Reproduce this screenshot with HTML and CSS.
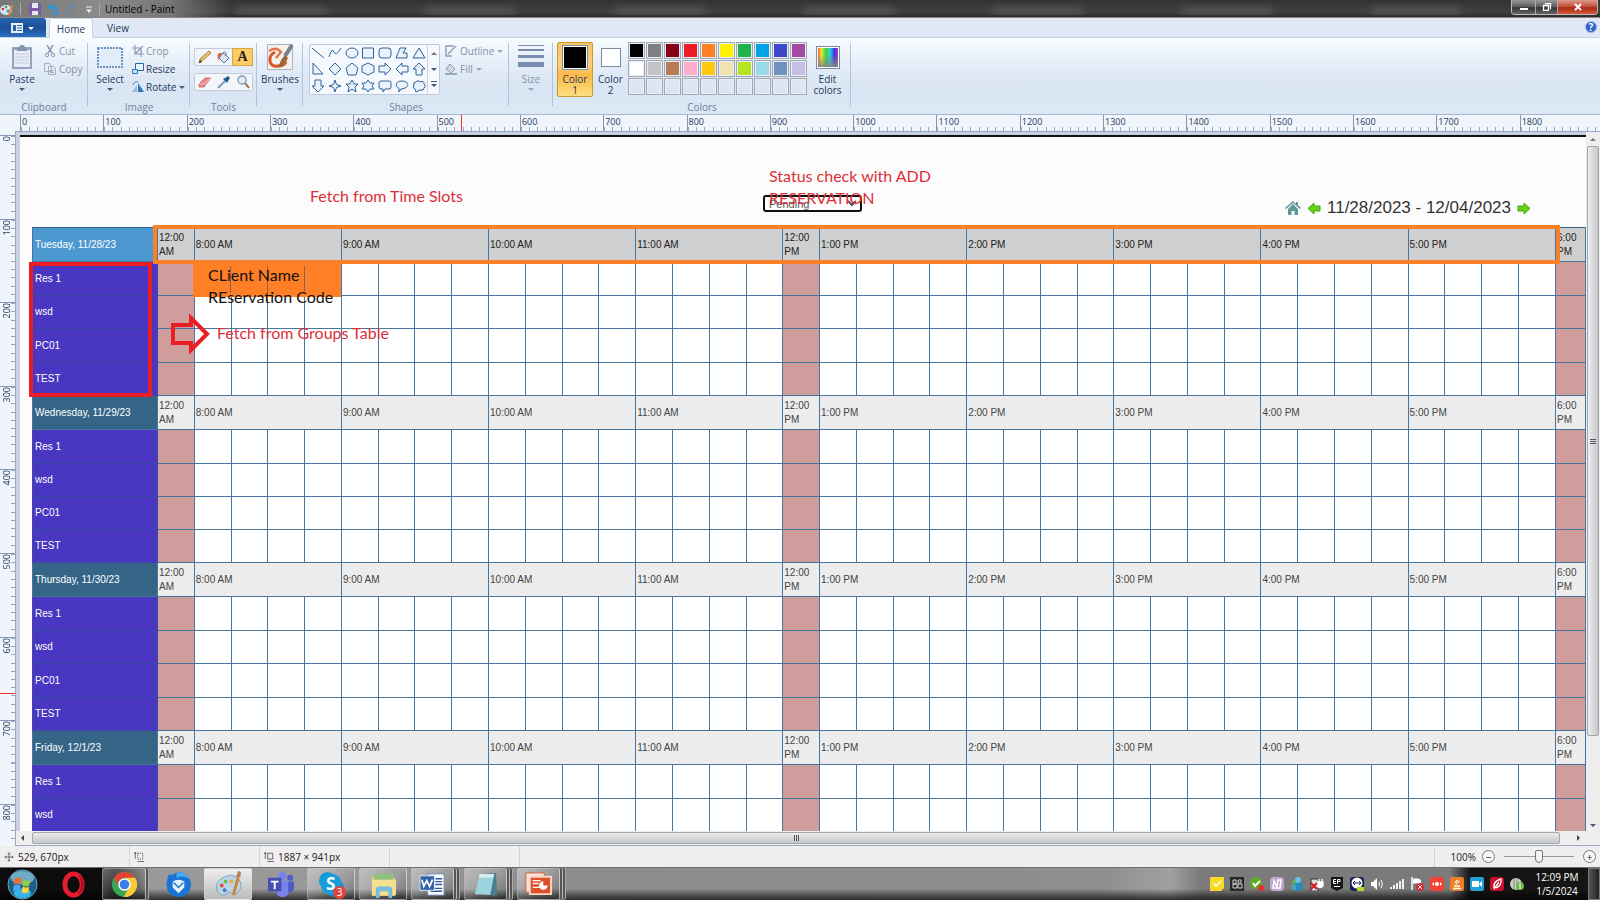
FILE: index.html
```html
<!DOCTYPE html>
<html lang="en">
<head>
<meta charset="utf-8">
<title>Untitled - Paint</title>
<link rel="stylesheet" href="styles.css">
</head>
<body>
<header class="titlebar">
  <svg class="app-icon" viewBox="0 0 14 14"><ellipse cx="6" cy="8" rx="6" ry="5" fill="#cfe6f2"/><circle cx="3" cy="7" r="1.3" fill="#d33"/><circle cx="6" cy="5" r="1.3" fill="#4a4"/><circle cx="8" cy="9" r="1.5" fill="#39c"/><path d="M12 3 9 13" stroke="#d98b2b" stroke-width="2"/></svg>
  <span class="bar-sep"></span>
  <button class="quick" aria-label="Save"><svg viewBox="0 0 12 12"><path d="M0 0h12v12H0z" fill="#7b5aa8"/><path d="M3 0h6v5H3zM3 8h6v4H3z" fill="#e9e4f4"/></svg></button>
  <button class="quick" aria-label="Undo"><svg viewBox="0 0 12 12"><path d="M4 4h3q4 1 2 6l-4 1" fill="none" stroke="#2f93cf" stroke-width="2.800"/><path d="M0 4 5 0v8z" fill="#2f93cf"/></svg></button>
  <button class="quick" aria-label="Redo"><svg viewBox="0 0 12 12"><path d="M8 4H5Q1 5 3 10l4 1" fill="none" stroke="#71869b" stroke-width="2.800"/><path d="M12 4 7 0v8z" fill="#71869b"/></svg></button>
  <button class="quick" aria-label="Customize"><svg viewBox="0 0 12 12"><path d="M3 4h6" stroke="#eee"/><path d="M3 6.500h6L6 10z" fill="#eee"/></svg></button>
  <span class="bar-sep"></span>
  <h1 class="title">Untitled - Paint</h1>
  <div class="ghosts"><i></i><i></i><i></i><i></i><i></i><i></i><i></i></div>
  <div class="win-buttons">
    <button class="min" aria-label="Minimize"><svg viewBox="0 0 10 8"><path d="M1 5h8v2H1z" fill="#fff"/></svg></button>
    <button class="max" aria-label="Restore"><svg viewBox="0 0 10 8"><path d="M3.500 0v1M3.500.5h5v5H8M1.500 2.500h5v5h-5z" fill="none" stroke="#fff" stroke-width="1.300"/></svg></button>
    <button class="close" aria-label="Close"><svg viewBox="0 0 10 8"><path d="m2 1 6 6M8 1 2 7" stroke="#fff" stroke-width="2"/></svg></button>
  </div>
</header>

<nav class="tabs">
  <button class="file-tab" aria-label="Paint menu"><svg viewBox="0 0 24 10"><path d="M0 0h12v10H0z" fill="#e8f0fa"/><path d="M2 2h3v6H2z" fill="#2d62ad"/><path d="M6 2.500h5M6 5h5M6 7.500h5" stroke="#2d62ad"/><path d="M17 4h6l-3 3z" fill="#fff"/></svg></button>
  <button class="tab active">Home</button>
  <button class="tab">View</button>
  <button class="help" aria-label="Help">?</button>
</nav>

<section class="ribbon">
  <div class="group g-clipboard">
    <div class="body">
      <button class="big"><svg class="big-icon" viewBox="0 0 24 26"><rect x="2" y="3" width="20" height="22" rx="1" fill="#93a3bb"/><path d="M4 6h16v17H4z" fill="#e7edf6"/><path d="M7 4h2q0-3 3-3t3 3h2v3H7z" fill="#8796ae"/><path d="M5 10h14M5 13h14M5 16h14M5 19h14" stroke="#c2ccdc"/></svg><span>Paste</span><i class="drop"></i></button>
      <div class="stack">
        <button class="small off"><svg viewBox="0 0 12 12"><path d="M3 0 8 8M9 0 4 8" stroke="#8d9bb3" stroke-width="1.500"/><circle cx="3" cy="10" r="1.700" fill="none" stroke="#8d9bb3"/><circle cx="9" cy="10" r="1.700" fill="none" stroke="#8d9bb3"/></svg>Cut</button>
        <button class="small off"><svg viewBox="0 0 12 12"><path d="M.5.5h5l2 2v6h-7zM4.500 3.500h5l2 2v6h-7z" fill="#e6ebf4" stroke="#a0adc2"/><path d="M6 7.500h4M6 9.500h4" stroke="#a0adc2"/></svg>Copy</button>
      </div>
    </div>
    <h2>Clipboard</h2>
  </div>
  <div class="group g-image">
    <div class="body">
      <button class="big"><svg class="big-icon" viewBox="0 0 26 26"><rect x="1" y="4" width="24" height="19" fill="#e3edf9" stroke="#4a78ad" stroke-width="1.500" stroke-dasharray="2 1"/></svg><span>Select</span><i class="drop"></i></button>
      <div class="stack">
        <button class="small off"><svg viewBox="0 0 12 12"><path d="M3 0v9h9M0 3h9v9M3 9l8-8" fill="none" stroke="#8d9bb3" stroke-width="1.200"/></svg>Crop</button>
        <button class="small"><svg viewBox="0 0 12 12"><path d="M3.500.5h8v7h-8z" fill="#eef6fd" stroke="#2a66a4"/><path d="M.5 6.500h5v4h-5z" fill="#cfe4f6" stroke="#2a78ba"/></svg>Resize</button>
        <button class="small"><svg viewBox="0 0 12 12"><path d="M0 11 5 4v7z" fill="#9eb7d0"/><path d="M6 2v9h6z" fill="#2f77b8"/><path d="M1 4q1-4 5-3" fill="none" stroke="#3b86c4"/></svg>Rotate<i class="drop"></i></button>
      </div>
    </div>
    <h2>Image</h2>
  </div>
  <div class="group g-tools">
    <div class="body">
      <div class="tool-row">
        <button aria-label="Pencil"><svg viewBox="0 0 14 14"><path d="m1 13 1-4 9-8 2 2-9 8z" fill="#edc65c" stroke="#8a6a2b" stroke-width=".8"/><path d="m1 13 1-3 2 2z" fill="#333"/></svg></button>
        <button aria-label="Fill with color"><svg viewBox="0 0 14 14"><path d="m6 3 6 5-5 5-5-5z" fill="#dbe8f4" stroke="#557ca3"/><path d="M6 3q1-3 3 0v3" fill="none" stroke="#557ca3"/><path d="M1 4q4-3 4 1Q2 5 2 10 0 8 1 4z" fill="#dd5a3b"/></svg></button>
        <button aria-label="Text" class="on">A</button>
      </div>
      <div class="tool-row">
        <button aria-label="Eraser"><svg viewBox="0 0 14 14"><path d="m1 9 6-6h6l-5 6-2 3H1z" fill="#e98b8b" stroke="#b65c60" stroke-width=".8"/><path d="M1 9h5l7-6" fill="none" stroke="#f7c2bd"/></svg></button>
        <button aria-label="Color picker"><svg viewBox="0 0 14 14"><path d="m1 13 7-7" stroke="#7c9abb" stroke-width="2"/><path d="m6 4 4 4 1-2 2-3-2-2-3 2z" fill="#225b96"/></svg></button>
        <button aria-label="Magnifier"><svg viewBox="0 0 14 14"><circle cx="6" cy="5" r="4" fill="#e2eff8" stroke="#8296ab" stroke-width="1.300"/><path d="m9 8 4 5" stroke="#9a6b43" stroke-width="2"/></svg></button>
      </div>
    </div>
    <h2>Tools</h2>
  </div>
  <div class="group g-brushes">
    <div class="body">
      <button class="big"><svg class="big-icon" viewBox="0 0 26 26"><path d="M.5.5h25v25H.5z" fill="#f4f1ec" stroke="#a9b3bf"/><path d="M8 8Q2 11 3 17t8 5q7-1 8-4" fill="none" stroke="#dc5429" stroke-width="3"/><path d="M2 7q7-5 12 1l-5 6" fill="none" stroke="#e8744a" stroke-width="2.500"/><path d="m25 1-7 11" stroke="#76828f" stroke-width="4"/><path d="m18 11 3 3-4 8-5 2q0-7 6-13z" fill="#a0683a"/></svg><span>Brushes</span><i class="drop"></i></button>
    </div>
    <h2></h2>
  </div>
  <div class="group g-shapes">
    <div class="body">
      <div class="shape-box">
        <div class="shape-grid">
          <svg viewBox="0 0 14 14"><path d="m1 2 12 10"/></svg>
          <svg viewBox="0 0 14 14"><path d="M1 11Q4 1 6 6t7-4" fill="none"/></svg>
          <svg viewBox="0 0 14 14"><ellipse cx="7" cy="7" rx="6" ry="5"/></svg>
          <svg viewBox="0 0 14 14"><path d="M1.500 2h11v10h-11z"/></svg>
          <svg viewBox="0 0 14 14"><rect x="1" y="2" width="12" height="10" rx="3"/></svg>
          <svg viewBox="0 0 14 14"><path d="M1 12 5 2h6L8 7h4v5z"/></svg>
          <svg viewBox="0 0 14 14"><path d="m7 2 6 10H1z"/></svg>
          <svg viewBox="0 0 14 14"><path d="m2 1 10 11H2z"/></svg>
          <svg viewBox="0 0 14 14"><path d="m7 1 6 6-6 6-6-6z"/></svg>
          <svg viewBox="0 0 14 14"><path d="m7 1 6 5-2 7H3L1 6z"/></svg>
          <svg viewBox="0 0 14 14"><path d="m7 1 6 3v6l-6 3-6-3V4z"/></svg>
          <svg viewBox="0 0 14 14"><path d="M1 4h6V1l6 6-6 6v-3H1z"/></svg>
          <svg viewBox="0 0 14 14"><path d="M13 4H7V1L1 7l6 6v-3h6z"/></svg>
          <svg viewBox="0 0 14 14"><path d="M4 13V7H1l6-6 6 6h-3v6z"/></svg>
          <svg viewBox="0 0 14 14"><path d="M4 1v6H1l6 6 6-6h-3V1z"/></svg>
          <svg viewBox="0 0 14 14"><path d="m7 1 1.500 4.500L13 7 8.500 8.500 7 13 5.500 8.500 1 7l4.500-1.500z"/></svg>
          <svg viewBox="0 0 14 14"><path d="m7 1 2 4h4l-3 3 1 5-4-3-4 3 1-5-3-3h4z"/></svg>
          <svg viewBox="0 0 14 14"><path d="m7 1 2 3h4l-2 3 2 3H9l-2 3-2-3H1l2-3-2-3h4z"/></svg>
          <svg viewBox="0 0 14 14"><path d="M3 2h8q2 0 2 2v4q0 2-2 2H7l-2 3v-3H3q-2 0-2-2V4q0-2 2-2z"/></svg>
          <svg viewBox="0 0 14 14"><path d="M4 13V9.500C-1 7 1 2 7 2s8 5 3 7q-2 1-4 1z"/></svg>
          <svg viewBox="0 0 14 14"><path d="M4 3q2-3 4 0 4-2 4 2 3 2 0 4 0 3-4 2l-4 2-1-3q-3-1-1-4-1-3 2-3z"/></svg>
        </div>
        <div class="shape-scroll"><i class="drop up"></i><i class="drop"></i><i class="drop bar"></i></div>
      </div>
      <div class="stack">
        <button class="small off"><svg viewBox="0 0 12 12"><path d="M9 1H1v10h6M3 9l8-8" fill="none" stroke="#8d9bb3" stroke-width="1.400"/></svg>Outline<i class="drop"></i></button>
        <button class="small off"><svg viewBox="0 0 12 12"><path d="m5 1 5 5-4 4-5-4z" fill="#ccd5e3" stroke="#8d9bb3"/><path d="M0 10h12v2H0z" fill="#9aa8bf"/></svg>Fill<i class="drop"></i></button>
      </div>
    </div>
    <h2>Shapes</h2>
  </div>
  <div class="group g-size">
    <div class="body">
      <button class="big off"><svg class="big-icon" viewBox="0 0 26 26"><path d="M0 1h26v1H0zM0 5h26v2H0zM0 11h26v3H0zM0 18h26v5H0z" fill="#7a8db0"/></svg><span>Size</span><i class="drop"></i></button>
    </div>
    <h2></h2>
  </div>
  <div class="group g-colors">
    <div class="body">
      <button class="color-btn current"><i class="swatch black"></i><span>Color<br>1</span></button>
      <button class="color-btn"><i class="swatch white"></i><span>Color<br>2</span></button>
      <div class="palette" id="palette"></div>
      <button class="color-btn"><i class="swatch rainbow"></i><span>Edit<br>colors</span></button>
    </div>
    <h2>Colors</h2>
  </div>
</section>

<main class="workspace">
  <div class="ruler-top" id="rulerTop"></div>
  <div class="ruler-left" id="rulerLeft"></div>
  <div class="viewport">
    <section class="canvas">
      <div class="canvas-head">
        <select class="status" aria-label="Status"><option>Pending</option></select>
        <div class="range">
          <button aria-label="Today"><svg class="home" viewBox="0 0 16 14"><path d="M8 0 0 7l1 1 7-6 7 6 1-1-3-3V1h-2v2z" fill="#5f9797"/><path d="m8 3 5 5v6H9.500v-4h-3v4H3V8z" fill="#5f9797"/></svg></button>
          <button aria-label="Previous week"><svg viewBox="0 0 14 13"><path d="M1 6.500 7 1v3h6v5H7v3z" fill="#62d413" stroke="#44a60c"/></svg></button>
          <span>11/28/2023 - 12/04/2023</span>
          <button aria-label="Next week"><svg viewBox="0 0 14 13"><path d="M13 6.500 7 1v3H1v5h6v3z" fill="#62d413" stroke="#44a60c"/></svg></button>
        </div>
      </div>
      <table class="schedule" id="schedule"></table>
      <div class="booking"></div>
      <div class="frame slots"></div>
      <div class="frame groups"></div>
      <svg class="arrow" viewBox="0 0 40 40"><path d="M3 11h18V4l16 16-16 16v-7H3z" fill="none" stroke="#ea1c24" stroke-width="4"/></svg>
      <p class="note n-slots">Fetch from Time Slots</p>
      <p class="note n-status">Status check with ADD<br>RESERVATION</p>
      <p class="note n-client">CLient Name<br>REservation Code</p>
      <p class="note n-groups">Fetch from Groups Table</p>
    </section>
    <div class="vscroll"><i class="drop up"></i><div class="thumb"></div><i class="drop"></i></div>
    <div class="hscroll"><i class="drop left"></i><div class="thumb"></div><i class="drop right"></i></div>
  </div>
</main>

<footer class="statusbar">
  <div class="cell"><svg viewBox="0 0 12 12"><path d="M6 1v10M1 6h10M4.500 2.500 6 1l1.500 1.500M4.500 9.500 6 11l1.500-1.500M2.500 4.500 1 6l1.500 1.500M9.500 4.500 11 6 9.500 7.500" fill="none" stroke="#444e60"/></svg>529, 670px</div>
  <div class="cell"><svg viewBox="0 0 12 12"><path d="M1.500 0v8M0 1.500h3M4 11.500h8" stroke="#444e60" fill="none"/><path d="M4.500 1.500h6v7h-6z" fill="none" stroke="#444e60" stroke-dasharray="1.500 1"/></svg></div>
  <div class="cell"><svg viewBox="0 0 12 12"><path d="M1.500 0v8M0 1.500h3M4 11.500h8M4.500 1.500h6v7h-6z" fill="none" stroke="#444e60"/></svg>1887 × 941px</div>
  <div class="cell"></div>
  <div class="zoom">
    <span>100%</span>
    <button aria-label="Zoom out">−</button>
    <input type="range" aria-label="Zoom" min="0" max="100" value="50">
    <button aria-label="Zoom in">+</button>
  </div>
</footer>

<nav class="taskbar">
  <button class="task start" aria-label="Start"><svg viewBox="0 0 32 32"><circle cx="16" cy="16" r="15" fill="#1b5d86" stroke="#6aa9c6"/><ellipse cx="16" cy="9" rx="12" ry="7" fill="#6fa9c4"/><ellipse cx="16" cy="25" rx="9" ry="5" fill="#32b4e5"/><path d="M8 10q4-2 7 0l-1 6q-3-2-7 0z" fill="#ee6b2f"/><path d="M17 11q4 2 7 0l-1 6q-4 2-7 0z" fill="#8fcf3c"/><path d="M7 17q4-2 7 0l-1 6q-3-2-7 0z" fill="#49a8ee"/><path d="M16 18q4 2 7 0l-1 6q-4 2-7 0z" fill="#fdd141"/></svg></button>
  <button class="task opera" aria-label="Opera"><svg viewBox="0 0 28 28"><ellipse cx="14" cy="14" rx="9" ry="11" fill="none" stroke="#e81c2c" stroke-width="5"/><path d="M18 4c5 4 5 16 0 20 9-2 9-18 0-20" fill="#a80f20"/></svg></button>
  <button class="task framed chrome" aria-label="Chrome"><svg viewBox="0 0 28 28"><circle cx="14" cy="14" r="13" fill="#36a852"/><path d="M3 7a13 13 0 0 1 22 0H14a7 7 0 0 0-6 10z" fill="#e54134"/><path d="M25 7a13 13 0 0 1-12 20l6-10a7 7 0 0 0-5-10z" fill="#fcc934"/><circle cx="14" cy="14" r="6.500" fill="#fff"/><circle cx="14" cy="14" r="5" fill="#3b7de9"/></svg></button>
  <button class="task thunder" aria-label="Thunderbird"><svg viewBox="0 0 28 28"><path d="M3 6q1-3 3-2 3 0 5-2 7-2 10 1 6 4 6 11-1 12-13 13Q3 26 2 17q-1-4 0-6z" fill="#1974d2"/><path d="M12 2q9-3 13 6-7-4-13-1z" fill="#4ba8f1"/><path d="M8 11q6-4 12 0v6l-6 6-6-6z" fill="#eaf3fd"/><path d="m9 12 5 5 5-5" fill="none" stroke="#1974d2" stroke-width="1.500"/></svg></button>
  <button class="task framed lit" aria-label="Paint"><svg viewBox="0 0 28 28"><path d="M3 22q-5-9 5-15t17 2q5 7-2 14-3 3-6 0t-5 1q-6 3-9-2z" fill="#b9d4e2" stroke="#7ba4bb"/><circle cx="7" cy="15" r="2" fill="#df4b3c"/><circle cx="11" cy="11" r="2" fill="#63b64e"/><circle cx="17" cy="11" r="2" fill="#eea740"/><circle cx="10" cy="20" r="2" fill="#457dca"/><path d="m24 7-5 18" stroke="#cd8239" stroke-width="3"/><path d="m22 6 2-6 3 1-1 6z" fill="#ba7b55"/></svg></button>
  <button class="task teams" aria-label="Teams"><svg viewBox="0 0 28 28"><circle cx="16" cy="5" r="4.500" fill="#7b83eb"/><circle cx="24" cy="7" r="3" fill="#5059c9"/><path d="M10 10h13v11q-1 6-7 6t-6-6z" fill="#7b83eb"/><path d="M22 11h6v7q-1 5-6 4z" fill="#5059c9"/><rect x="1" y="7" width="14" height="14" fill="#474fb2"/><path d="M4 10h8v2H9v7H7v-7H4z" fill="#fff"/></svg></button>
  <button class="task framed skype" aria-label="Skype"><svg viewBox="0 0 28 28"><circle cx="10" cy="10" r="9" fill="#1499d8"/><circle cx="18" cy="18" r="9" fill="#0f83c5"/><circle cx="14" cy="14" r="11" fill="#149ddd"/></svg><b>S</b><em>3</em></button>
  <button class="task framed" aria-label="Explorer"><svg viewBox="0 0 28 28"><path d="M2 5h9l2 2h13v19H2z" fill="#e5c66b"/><path d="M4 3h20v7H4z" fill="#8fc17e"/><path d="M2 9h25v16H2z" fill="#f6df91"/><path d="M6 28v-9q0-3 3-3h11q3 0 3 3v9h-4v-7h-9v7z" fill="#76bce0"/></svg></button>
  <button class="task framed stacked" aria-label="Word"><svg viewBox="0 0 28 28"><path d="M9 3h17v22H9z" fill="#fff" stroke="#6a87b5"/><path d="M17 8h7M17 11h7M17 14h7M12 18h12M12 21h12" stroke="#2b579a" stroke-width="1.500"/><path d="M1 5h15v15H1z" fill="#3263a8" stroke="#dce8f7"/><path d="m3 9 2 7 3-6 3 6 3-7" fill="none" stroke="#fff" stroke-width="1.800"/></svg></button>
  <button class="task framed stacked" aria-label="Notepad"><svg viewBox="0 0 28 28"><path d="m8 3 17-1 1 22-4 3z" fill="#477e90"/><path d="M8 3h15l-4 22q-8-1-16-1z" fill="#9bd3de"/><path d="M8 3h15l-1 4H7z" fill="#d5edf0"/></svg></button>
  <button class="task framed stacked" aria-label="PowerPoint"><svg viewBox="0 0 28 28"><path d="M1 2h19v20H1z" fill="#fbe4d9" stroke="#d35d37"/><path d="M5 6h22v18H5z" fill="#dc5128" stroke="#f9d4c4" stroke-width="2"/><path d="M8 10h8M8 13h6M8 17h8" stroke="#fff" stroke-width="1.500"/><circle cx="19" cy="15" r="4.500" fill="#fff"/><path d="M19 15v-5a5 5 0 0 1 5 5z" fill="#dc5128"/></svg></button>
  <div class="tray">
    <svg viewBox="0 0 14 14"><path d="M0 0h14v11l-3 3H0z" fill="#f6dc20"/><path d="m4 6 2 3 5-5" fill="none" stroke="#fff" stroke-width="1.500"/></svg>
    <svg viewBox="0 0 14 14"><path d="M0 0h14v14H0z" fill="#26282b"/><path d="M3 3h3v4H3zM3 7h4v4H3zM8 3h3v3H8zM8 7h4v4H8z" fill="none" stroke="#cfcfcf"/></svg>
    <svg viewBox="0 0 14 14"><circle cx="6" cy="6" r="6" fill="#62ab28"/><path d="m3 6 2 3 5-5" fill="none" stroke="#fff" stroke-width="1.800"/><circle cx="11" cy="11" r="3" fill="#e92e2e"/></svg>
    <svg viewBox="0 0 14 14"><rect width="14" height="14" rx="4" fill="#c1a6ce"/><path d="m3 11 1-7 3 6 1-7h3l-1 8z" fill="none" stroke="#fff" stroke-width="1.600"/></svg>
    <svg viewBox="0 0 14 14"><circle cx="8" cy="3" r="3" fill="#65c2e8"/><path d="M4 6h9v5l-3 3H5z" fill="#298abf"/><circle cx="4" cy="5" r="2" fill="#65b457"/><path d="M1 8h5v5H3z" fill="#4fa0c4"/></svg>
    <svg viewBox="0 0 14 14"><path d="M1 2h7v12H1z" fill="#ddd" stroke="#333"/><path d="M7 5h6v4q-3 3-6 0M9 2v3M12 2v3" fill="#fff" stroke="#fff" stroke-width="1.300"/><path d="m1 6 6 6M7 6l-6 6" stroke="#d61919" stroke-width="2"/></svg>
    <svg viewBox="0 0 14 14"><path d="M1 0h12v11l-6 3-6-3z" fill="#151515"/><path d="M6 2.500H3.500v4H6M3.500 4.500H6M7.500 7V2.500H10v2H8M4 9.500h6" fill="none" stroke="#fff"/></svg>
    <svg viewBox="0 0 14 14"><rect width="14" height="14" rx="3" fill="#182058"/><circle cx="7" cy="6" r="5.500" fill="#fff"/><path d="M3 6h8M5 4 3 6l2 2M9 4l2 2-2 2" fill="none" stroke="#182058"/><path d="M7 10h7v4H7z" fill="#b0dc28"/></svg>
    <svg viewBox="0 0 14 14"><path d="M1 5h2l4-4v12L3 9H1z" fill="#fff"/><path d="M9 5q1 2 0 4M11 3q3 4 0 8" fill="none" stroke="#fff"/></svg>
    <svg viewBox="0 0 14 14"><path d="M0 10h2v2H0zM3 8h2v4H3zM6 6h2v6H6zM9 4h2v8H9zM12 2h2v10h-2z" fill="#eee"/></svg>
    <svg viewBox="0 0 14 14"><path d="M2 0v13" stroke="#fff" stroke-width="1.500"/><path d="M3 2q4-2 8 1v5q-4-3-8-1z" fill="#fff"/><circle cx="10" cy="10" r="4" fill="#d92b2b"/><path d="m8 8 4 4M12 8l-4 4" stroke="#fff"/></svg>
    <svg viewBox="0 0 14 14"><rect width="14" height="14" rx="2" fill="#f04336"/><circle cx="7" cy="7" r="2" fill="#fff"/><path d="m2 7 2-2v4zM12 7l-2-2v4z" fill="#fff"/></svg>
    <svg viewBox="0 0 14 14"><rect width="14" height="14" rx="2" fill="#ee7d27"/><path d="M3 11.500h8M4 9h6M7 7q-3-2 1-4M8 6l1-2" fill="none" stroke="#fff" stroke-width="1.300"/></svg>
    <svg viewBox="0 0 14 14"><rect width="14" height="14" rx="2" fill="#22a0db"/><path d="M2 4h7v6H2zM9 7l3-3v6z" fill="#fff"/></svg>
    <svg viewBox="0 0 14 14"><rect width="14" height="14" rx="3" fill="#c9102e"/><path d="M4 11Q3 4 11 2q1 7-5 9M4 12l5-7" fill="none" stroke="#fff" stroke-width="1.300"/></svg>
    <svg viewBox="0 0 14 14"><circle cx="6" cy="7" r="6" fill="#c9d2c8"/><path d="M4 2v10M7 1v12" stroke="#73806f"/><circle cx="10" cy="9" r="4" fill="#72b84b"/><path d="M10 6v6" stroke="#fff"/></svg>
  </div>
  <div class="clock"><span>12:09 PM</span><span>1/5/2024</span></div>
  <button class="desktop" aria-label="Show desktop"></button>
</nav>
<script src="app.js"></script>
</body>
</html>
```
FILE: styles.css
```css
* { box-sizing: border-box; margin: 0; padding: 0; }
body { height: 100vh; display: flex; flex-direction: column; overflow: hidden; font: 10px/12px "Open Sans", "Noto Sans", sans-serif; color: #1e395b; background: #dfe8f4; }
button { border: 0; background: none; font: inherit; color: inherit; }
svg { display: block; flex: none; }
h1, h2 { font: inherit; }

.titlebar { flex: none; height: 18px; display: flex; align-items: center; background: linear-gradient(90deg, #777, #8a8a8a 100px, #777 170px, transparent 230px), linear-gradient(#333, #404040 70%, #2c2c2c); border-bottom: 1px solid #888; }
.app-icon { width: 14px; height: 14px; }
.bar-sep { width: 1px; height: 12px; margin: 0 5px 0 0; background: #aaa; }
.app-icon + .bar-sep { margin: 0 8px 0 6px; }
.quick { width: 12px; height: 12px; margin-right: 6px; }
.quick:nth-of-type(4) { margin-right: 4px; }
.quick svg { width: 12px; height: 12px; }
.title { color: #000; line-height: 16px; padding-right: 12px; }
.ghosts { flex: 1; display: flex; justify-content: space-around; overflow: hidden; }
.ghosts i { width: 90px; height: 7px; margin-top: 6px; background: #5a5a5a; filter: blur(4px); }
.win-buttons { display: flex; height: 15px; align-self: flex-start; margin-right: 2px; border: 1px solid #bbb; border-top: 0; border-radius: 0 0 4px 4px; overflow: hidden; }
.win-buttons button { width: 24px; display: grid; place-items: center; background: linear-gradient(#999, #5a5a5a 50%, #333 55%, #666); border-right: 1px solid #aaa; }
.win-buttons .max { width: 22px; }
.win-buttons .close { width: 39px; border: 0; background: linear-gradient(#dc9a8c, #c04a32 50%, #a62a11 55%, #d8593a); }
.win-buttons svg { width: 10px; height: 8px; }

.tabs { flex: none; height: 20px; display: flex; align-items: stretch; background: #dfe8f4; border-bottom: 1px solid #c5d3e5; }
.file-tab { width: 46px; display: grid; place-items: center; background: linear-gradient(#2764ad, #1b4f97 50%, #2d70bf); border-radius: 0 3px 0 0; }
.file-tab svg { width: 24px; height: 10px; }
.tab { width: 44px; margin-left: 3px; height: 20px; }
.tab.active { background: #fbfdff; border: 1px solid #c5d3e5; border-bottom: 0; border-radius: 3px 3px 0 0; }
.help { margin: 3px 3px 0 auto; width: 12px; height: 12px; border-radius: 50%; background: #2c61cf; border: 1px solid #9db8ea; color: #fff; font-weight: 700; line-height: 10px; }

.ribbon { flex: none; height: 76px; display: flex; padding-top: 4px; background: linear-gradient(#f7fcff, #e4edf8 35%, #dae5f3 65%, #dde8f6); }
.group { display: flex; flex-direction: column; position: relative; }
.group::after { content: ""; position: absolute; right: 0; top: 1px; bottom: 8px; width: 1px; background: #b4c4d8; }
.body { height: 58px; display: flex; align-items: flex-start; }
.group h2 { text-align: center; color: #6f809a; line-height: 14px; }
.g-clipboard { width: 88px; }
.g-image { width: 102px; }
.g-tools { width: 67px; }
.g-brushes { width: 46px; }
.g-shapes { width: 206px; }
.g-size { width: 44px; }
.g-colors { width: 298px; }
.big { width: 44px; display: flex; flex-direction: column; align-items: center; padding-top: 2px; }
.g-brushes .big { width: 46px; }
.big-icon { width: 26px; height: 26px; margin-bottom: 3px; }
.off { color: #8291a8; }
.drop { display: block; width: 0; border: 3px solid transparent; border-top-color: #465a78; border-bottom: 0; }
.big .drop { margin-top: 3px; }
.off .drop { border-top-color: #9aa8bc; }
.drop.up { border: 3px solid transparent; border-top: 0; border-bottom-color: #777; }
.drop.left { border: 3px solid transparent; border-left: 0; border-right-color: #444; }
.drop.right { border: 3px solid transparent; border-right: 0; border-left-color: #444; }
.stack { display: flex; flex-direction: column; gap: 6px; padding-top: 3px; }
.small { display: flex; align-items: center; gap: 3px; white-space: nowrap; height: 12px; }
.g-image .small { gap: 2px; }
.small svg { width: 12px; height: 12px; }
.g-tools .body { flex-direction: column; gap: 7px; padding: 6px 0 0 4px; }
.tool-row { display: flex; border: 1px solid #c2ccd9; background: #f2f6fb; border-radius: 2px; }
.tool-row button { width: 19px; height: 16px; display: grid; place-items: center; }
.tool-row svg { width: 14px; height: 14px; }
.tool-row .on { background: #fbcb64; outline: 1px solid #d9a444; font: 700 14px/16px "Liberation Serif", serif; color: #222; }
.shape-box { width: 131px; height: 51px; margin: 2px 5px 0 6px; display: flex; background: #f5f9fd; border: 1px solid #bccadb; border-radius: 2px; }
.shape-grid { flex: 1; display: grid; grid-template-columns: repeat(7, 1fr); place-items: center; }
.shape-grid svg { width: 14px; height: 14px; fill: #eaf2fb; stroke: #2f6399; }
.shape-scroll { width: 12px; display: flex; flex-direction: column; justify-content: space-around; align-items: center; border-left: 1px solid #c9d5e3; }
.shape-scroll .bar { position: relative; }
.shape-scroll .bar::before { content: ""; position: absolute; left: -3px; top: -6px; width: 6px; height: 1px; background: #465a78; }
.color-btn { width: 35px; height: 55px; display: flex; flex-direction: column; align-items: center; line-height: 11px; border: 1px solid transparent; }
.color-btn.current { margin-left: 4px; width: 36px; background: linear-gradient(#f6c562, #fbd181 40%, #fdb847 60%, #fddf7f); border-color: #c9962f; border-radius: 2px; }
.swatch { display: block; width: 26px; height: 26px; margin: 2px 0 4px; border: 1px solid #7c8ba0; outline: 1px solid #fff; outline-offset: -2px; }
.black { background: #000; }
.white { background: #fff; width: 20px; height: 20px; margin: 5px 0 7px; }
.rainbow { width: 24px; height: 24px; margin: 3px 0 5px; background: linear-gradient(transparent 40%, #888), linear-gradient(90deg, #e63b2e, #f3e73b, #3bd23f, #31c9dc, #3a35d4, #dd38c3); }
.palette { display: grid; grid-template-columns: repeat(10, 17px); grid-auto-rows: 17px; gap: 1px; margin: 0 3px 0 0; }
.palette button { border: 1px solid #a0a8b3; box-shadow: inset 0 0 0 1px #e9eef5; }

.workspace { flex: 1; min-height: 0; display: grid; grid-template: 16px minmax(0, 1fr) / 15px minmax(0, 1fr); background: #f0f4fb; border-top: 1px solid #a6b7cd; }
.ruler-top { grid-column: 1 / 3; display: flex; margin: 0 -3px 0 20px; position: relative; font-size: 9px; line-height: 13px; }
.ruler-top span { flex: 1; padding-left: 1px; border-left: 1px solid #8797b3; background: repeating-linear-gradient(90deg, #9aa8c0 0 1px, transparent 1px 10%) 0 100% / 100% 4px no-repeat; }
.ruler-top::after { content: ""; position: absolute; left: 441px; top: 0; width: 1px; height: 16px; background: #e33; }
.ruler-left { display: flex; flex-direction: column; padding-top: 4px; position: relative; font-size: 9px; line-height: 13px; }
.ruler-left span { flex: 2; min-height: 0; border-top: 1px solid #8797b3; background: repeating-linear-gradient(#9aa8c0 0 1px, transparent 1px 10%) 100% 0 / 4px 100% no-repeat; }
.ruler-left span:last-child { flex: 1; background-size: 4px 200%; }
.ruler-left b { display: flex; justify-content: flex-end; font-weight: 400; width: 13px; writing-mode: vertical-rl; transform: rotate(180deg); }
.ruler-left::after { content: ""; position: absolute; left: 0; bottom: 152px; width: 15px; height: 1px; background: #e33; }
.viewport { display: grid; grid-template: minmax(0, 1fr) 14px / minmax(0, 1fr) 14px; background: #c8d0e2; border: solid #9aa9c4; border-width: 1px 0 1px 1px; }
.canvas { margin: 3px 0 0 4px; border-top: 2px solid #111; position: relative; overflow: hidden; background: #fcfcfc; }
.canvas-head { height: 90px; display: grid; grid-template-columns: 1fr auto 1fr; align-items: end; padding: 0 55px 9px 74px; }
.status { grid-column: 2; width: 99px; height: 17px; margin-bottom: 6px; border: 2px solid #111; border-radius: 3px; background: #fff; font: 11px "Liberation Sans", Arial, sans-serif; color: #555; }
.range { justify-self: end; display: flex; align-items: center; gap: 6px; font: 17px/20px "Liberation Sans", Arial, sans-serif; color: #333; }
.range svg { width: 14px; height: 13px; }
.range .home { width: 16px; height: 14px; }
.schedule { width: calc(100% - 12px); margin-left: 12px; table-layout: fixed; border-collapse: collapse; font: 10px/14px "Liberation Sans", Arial, sans-serif; background: #fff; }
.col-name { width: 125px; }
.col-last { width: 30px; }
.schedule th, .schedule td { border: 1px solid #4a759c; text-align: left; font-weight: 400; padding: 0 0 0 1px; height: 33px; overflow: hidden; }
.schedule .head th { height: 34px; background: #ececec; color: #444; border-top-color: #2d5f88; }
.schedule tr:nth-child(2) > * { height: 34px; }
.schedule tbody:nth-of-type(odd) tr:nth-child(4) > * { height: 34px; }
.schedule .head .day { background: #346587; color: #fff; padding-left: 2px; }
.schedule .today .head th { background: #cfcfcf; color: #222; }
.schedule .today .head .day { background: #4c98d1; color: #fff; }
.schedule .name { background: #4936c1; color: #fff; border-color: #3f4aa8; padding-left: 2px; }
.schedule .closed { background: #cf9e9c; }
.booking { position: absolute; left: 173px; top: 126px; width: 148px; height: 34px; background: linear-gradient(90deg, transparent 37px, #8c6252 37px 38px, transparent 38px 74px, #8c6252 74px 75px, transparent 75px 111px, #8c6252 111px 112px, transparent 112px) 0 3px / 100% 27px no-repeat #ff7f27; }
.frame { position: absolute; border: 4px solid; }
.slots { left: 133px; top: 88px; right: 26px; height: 39px; border-color: #fa8128; }
.groups { left: 9px; top: 125px; width: 123px; height: 135px; border-color: #ea1c24; }
.arrow { position: absolute; left: 150px; top: 177px; width: 40px; height: 40px; }
.note { position: absolute; font: 16px/22px Lato, "Open Sans", sans-serif; white-space: nowrap; color: #dc3038; }
.n-slots { left: 290px; top: 48px; }
.n-status { left: 749px; top: 28px; }
.n-client { left: 188px; top: 127px; color: #111; }
.n-groups { left: 197px; top: 185px; }
.vscroll { background: #eee; display: flex; flex-direction: column; align-items: center; padding: 6px 0 4px; }
.vscroll .thumb { width: 12px; flex: 0 1 590px; margin: 5px 0 auto; border: 1px solid #a5a5a5; border-radius: 2px; background: linear-gradient(#555 0 1px, transparent 1px 2px, #555 2px 3px, transparent 3px 4px, #555 4px 5px) center / 6px 5px no-repeat, linear-gradient(90deg, #eee, #c4c6ca); }
.hscroll { grid-column: 1 / 3; background: #eee; display: flex; align-items: center; padding: 0 20px 0 5px; }
.hscroll .thumb { flex: 1; height: 12px; margin: 0 17px 0 8px; border: 1px solid #a5a5a5; border-radius: 2px; background: linear-gradient(90deg, #555 0 1px, transparent 1px 2px, #555 2px 3px, transparent 3px 4px, #555 4px 5px) center / 5px 6px no-repeat, linear-gradient(#eee, #c4c6ca); }

.statusbar { flex: none; height: 21px; display: flex; align-items: stretch; background: #f0eeee; color: #222; }
.cell { width: 130px; display: flex; align-items: center; gap: 4px; padding-left: 4px; border-right: 1px solid #d8d4d4; }
.cell svg { width: 10px; height: 10px; }
.zoom { margin-left: auto; width: 166px; border-left: 1px solid #d8d4d4; display: flex; align-items: center; justify-content: flex-end; gap: 6px; padding-right: 4px; }
.zoom button { width: 13px; height: 13px; border: 1px solid #777; border-radius: 50%; line-height: 10px; background: #f8f8f8; }
.zoom input { width: 76px; height: 14px; appearance: none; background: linear-gradient(#999, #999) center / 70px 1px no-repeat; }
.zoom input::-webkit-slider-thumb { appearance: none; width: 8px; height: 13px; border: 1px solid #777; border-radius: 2px 2px 4px 4px; background: #f4f4f4; }

.taskbar { flex: none; height: 33px; display: flex; align-items: stretch; border-top: 1px solid #6e6e6e; background: linear-gradient(transparent 65%, #0008 90%, #000a), linear-gradient(90deg, #0c0c0c 0 115px, #999 150px 300px, #8c8c8c 600px, #8e8e8e 1100px, #a0a0a0 1170px, #7b7b7b 1200px 1450px, #151515 1470px); }
.task { width: 52px; display: grid; place-items: center; position: relative; }
.task svg { width: 27px; height: 27px; }
.start { width: 44px; }
.start svg { width: 31px; height: 31px; }
.opera { width: 58px; }
.framed { width: 48px; margin-right: 4px; border: 1px solid #ddd8; border-radius: 2px; background: linear-gradient(135deg, #fff6, #fff1 60%, #0003); }
.chrome { width: 44px; margin-right: 6px; box-shadow: 2px 0 0 #555, 3px 0 0 #aaa; }
.lit { margin: 0 1px 0 0; background: linear-gradient(#eee, #bbb); }
.teams { width: 54px; }
.stacked { width: 43px; margin-right: 10px; box-shadow: 2px 0 0 #555, 3px 0 0 #bbb, 5px 0 0 #555, 6px 0 0 #aaa; }
.skype b { position: absolute; left: 18px; top: 5px; font-size: 17px; line-height: 20px; color: #fff; }
.skype em { position: absolute; left: 25px; top: 17px; width: 13px; height: 13px; border-radius: 50%; background: #e2433c; color: #fff; font-style: normal; line-height: 13px; }
.tray { margin-left: auto; display: flex; align-items: center; gap: 6px; padding-right: 2px; }
.tray svg { width: 14px; height: 14px; }
.clock { width: 62px; display: flex; flex-direction: column; justify-content: center; text-align: center; color: #fff; line-height: 14px; }
.desktop { width: 12px; border: 1px solid #777; background: linear-gradient(90deg, #555, #222); }
```
FILE: app.js
```js
const colors = [
  '#000000', '#7f7f7f', '#880015', '#ed1c24', '#ff7f27', '#fff200', '#22b14c', '#00a2e8', '#3f48cc', '#a349a4',
  '#ffffff', '#c3c3c3', '#b97a57', '#ffaec9', '#ffc90e', '#efe4b0', '#b5e61d', '#99d9ea', '#7092be', '#c8bfe7'
];
const palette = document.getElementById('palette');
for (let i = 0; i < 30; i++) {
  const swatch = document.createElement('button');
  swatch.setAttribute('aria-label', colors[i] || 'Empty');
  swatch.style.background = colors[i] || 'transparent';
  palette.append(swatch);
}

const marks = n => Array.from({ length: n }, (_, i) => i * 100);
document.getElementById('rulerTop').innerHTML = marks(19).map(n => `<span>${n}</span>`).join('');
document.getElementById('rulerLeft').innerHTML = marks(9).map(n => `<span><b>${n}</b></span>`).join('');

const resources = ['Res 1', 'wsd', 'PC01', 'TEST'];
const days = [
  ['Tuesday, 11/28/23', resources],
  ['Wednesday, 11/29/23', resources],
  ['Thursday, 11/30/23', resources],
  ['Friday, 12/1/23', resources.slice(0, 2)]
];
const slots = [
  ['12:00 AM', 1], ['8:00 AM', 4], ['9:00 AM', 4], ['10:00 AM', 4], ['11:00 AM', 4], ['12:00 PM', 1],
  ['1:00 PM', 4], ['2:00 PM', 4], ['3:00 PM', 4], ['4:00 PM', 4], ['5:00 PM', 4], ['6:00 PM', 1]
];
const columns = '<colgroup><col class="col-name">' + '<col>'.repeat(38) + '<col class="col-last"></colgroup>';
const cells = slots.map(([, span]) => span === 1 ? '<td class="closed"></td>' : '<td></td>'.repeat(span)).join('');
const heads = slots.map(([time, span]) => `<th colspan="${span}">${time}</th>`).join('');
document.getElementById('schedule').innerHTML = columns + days.map(([day, names], i) =>
  `<tbody class="${i === 0 ? 'today' : 'later'}"><tr class="head"><th class="day">${day}</th>${heads}</tr>` +
  names.map(name => `<tr><th class="name">${name}</th>${cells}</tr>`).join('') + '</tbody>').join('');
```
